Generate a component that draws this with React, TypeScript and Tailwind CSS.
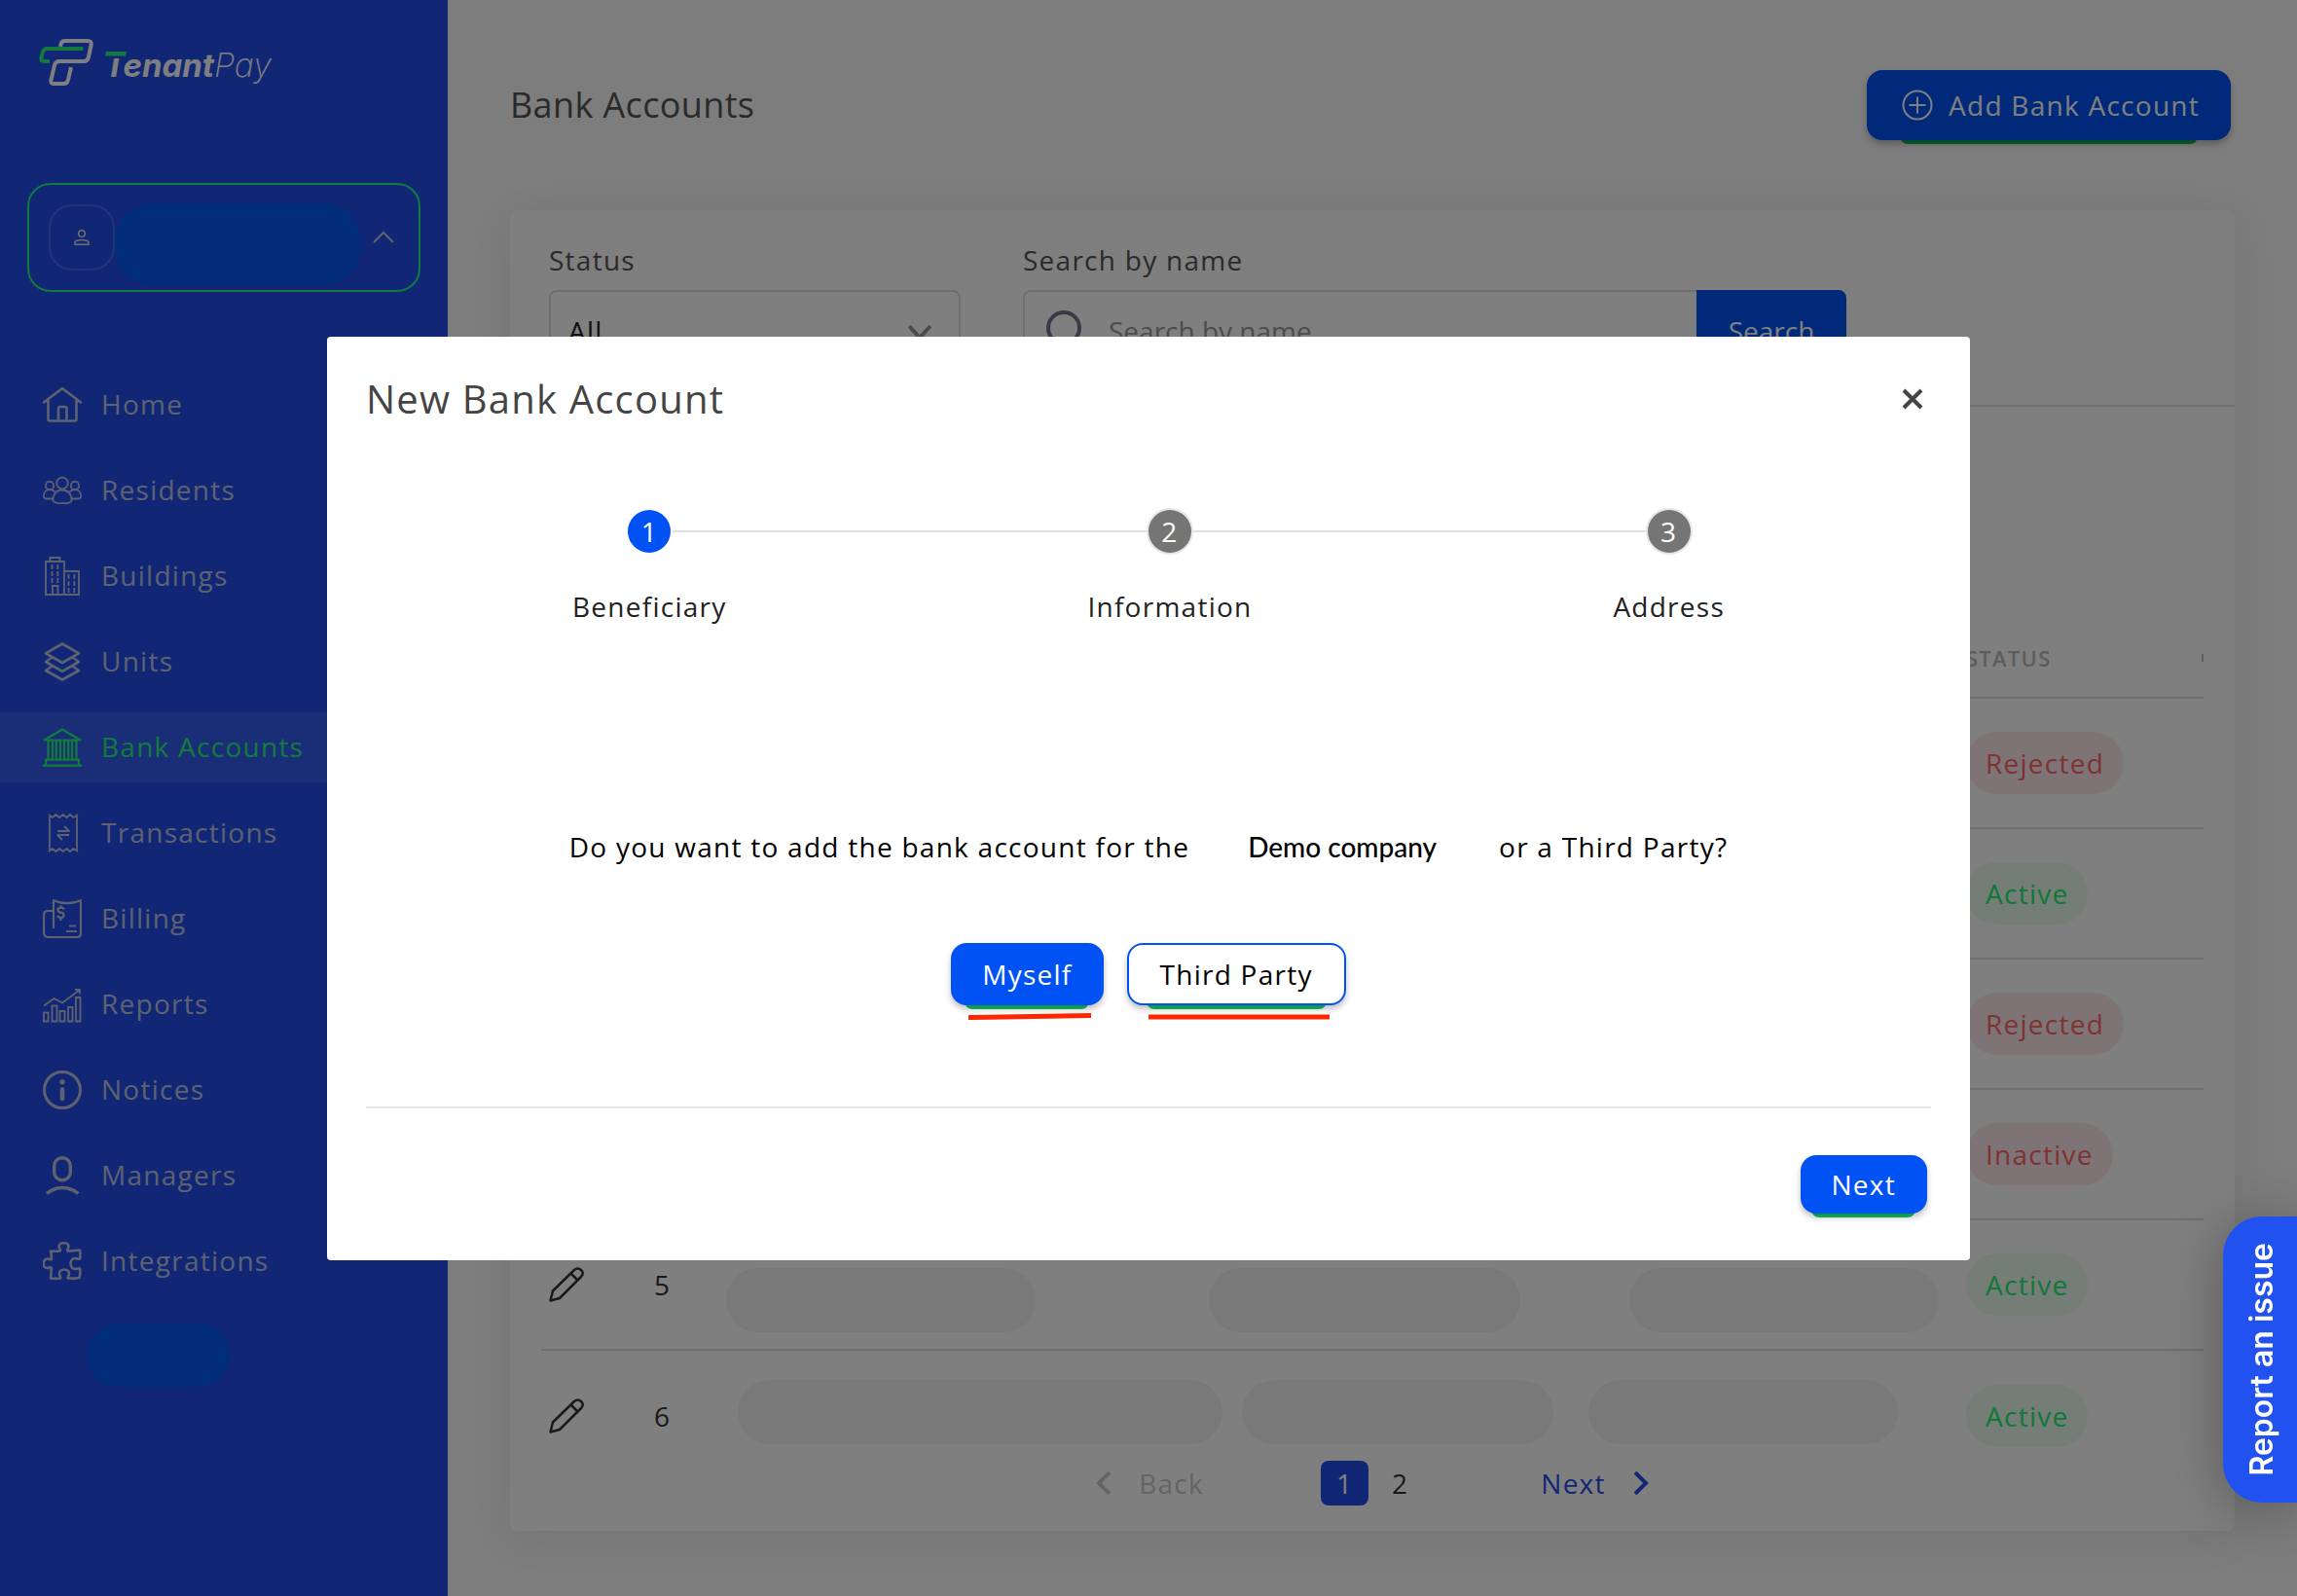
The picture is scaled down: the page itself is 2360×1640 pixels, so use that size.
import type { ReactNode } from 'react'
import clsx from 'clsx'

const navItems = [
  { name: 'Home', icon: <HomeIcon /> },
  { name: 'Residents', icon: <ResidentsIcon /> },
  { name: 'Buildings', icon: <BuildingsIcon /> },
  { name: 'Units', icon: <UnitsIcon /> },
  { name: 'Bank Accounts', icon: <BankIcon />, active: true },
  { name: 'Transactions', icon: <TransactionsIcon /> },
  { name: 'Billing', icon: <BillingIcon /> },
  { name: 'Reports', icon: <ReportsIcon /> },
  { name: 'Notices', icon: <NoticesIcon /> },
  { name: 'Managers', icon: <ManagersIcon /> },
  { name: 'Integrations', icon: <IntegrationsIcon /> },
]

// masked values, each account has its own block widths
const accounts = [
  { id: 1, status: 'Rejected', cell: 'pl-2.5', masks: ['w-[320px]', 'w-[320px] ml-44', 'w-[318px] ml-28'] },
  { id: 2, status: 'Active', cell: 'pl-2.5', masks: ['w-[320px]', 'w-[320px] ml-44', 'w-[318px] ml-28'] },
  { id: 3, status: 'Rejected', cell: 'pl-2.5', masks: ['w-[320px]', 'w-[320px] ml-44', 'w-[318px] ml-28'] },
  { id: 4, status: 'Inactive', cell: 'pl-2.5', masks: ['w-[320px]', 'w-[320px] ml-44', 'w-[318px] ml-28'] },
  { id: 5, status: 'Active', cell: 'pl-2.5 pt-8', masks: ['w-[318px]', 'w-[320px] ml-[178px]', 'w-[318px] ml-28'] },
  { id: 6, status: 'Active', cell: 'pl-[22px] pb-2', masks: ['w-[498px]', 'w-[320px] ml-5', 'w-[318px] ml-9'] },
]

const steps = ['Beneficiary', 'Information', 'Address']

function Icon({ children, width = 2 }: { children: ReactNode; width?: number }) {
  return (
    <svg
      viewBox="0 0 40 40"
      className="size-10 shrink-0"
      fill="none"
      stroke="currentColor"
      strokeWidth={width}
      strokeLinejoin="round"
      aria-hidden="true"
    >
      {children}
    </svg>
  )
}

function HomeIcon() {
  return (
    <Icon width={2.6}>
      <path d="M1 17.500 20 3l19 14.500" strokeLinecap="round" />
      <path d="M5.500 15v19.500q0 2 2 2h25q2 0 2-2V15M16 36V24q0-2 2-2h4.500q2 0 2 2v12" />
    </Icon>
  )
}

function ResidentsIcon() {
  return (
    <Icon width={1.8}>
      <circle cx="20" cy="12.500" r="5.800" />
      <circle cx="7" cy="15" r="4.200" />
      <circle cx="33" cy="15" r="4.200" />
      <path d="M20 19.500c-6 0-9.500 4-9.500 10.500 0 2 3 3.200 9.500 3.200s9.500-1.200 9.500-3.200c0-6.500-3.500-10.500-9.500-10.500Z" />
      <path d="M10.500 28.500H4q-3 0-3-2.500c0-4 2.500-6.800 6-6.800 2.500 0 4.500.800 5.500 2.500M29.500 28.500H36q3 0 3-2.500c0-4-2.500-6.800-6-6.800-2.500 0-4.500.800-5.500 2.500" />
    </Icon>
  )
}

function BuildingsIcon() {
  return (
    <Icon width={1.8}>
      <path d="M3 39V5h19v34ZM7.500 5V1h10v4M22 15h15v24H22M10 39v-9h5.500v9" strokeLinejoin="miter" />
      <path d="M9.500 8v5m5.800-5v5M9.500 15v5m5.800-5v5M9.500 22v5m5.800-5v5M26.500 18v5m5.800-5v5M26.500 25v5m5.800-5v5M26.500 32v5m5.800-5v5" />
    </Icon>
  )
}

function UnitsIcon() {
  return (
    <Icon width={2.6}>
      <path d="m20 1.500 17 9.800L20 21 3 11.300Z" />
      <path d="M9.500 15.500 3 20l17 9.800L37 20l-6.500-4.500" />
      <path d="M9.500 24.500 3 29l17 9.500L37 29l-6.500-4.500" />
    </Icon>
  )
}

function BankIcon() {
  return (
    <Icon width={2.2}>
      <path d="M20 1.500 38.500 12.500h-37Z" />
      <path d="M5.500 13h4.500v19.500H5.500ZM13.800 13h4.200v19.500h-4.200ZM22 13h4.200v19.500H22ZM30 13h4.500v19.500H30Z" />
      <path d="M3 38v-5.500h34V38M0 38.700h40" />
    </Icon>
  )
}

function TransactionsIcon() {
  return (
    <Icon width={1.8}>
      <path d="M7 1v38M35 1v38M6 1l4 3 3.500-3L17 4l3.700-3L24.500 4 28 1l3.500 3L36 1M6 39l4-3 3.500 3 3.500-3 3.700 3 3.800-3 3.500 3 3.500-3 4.500 3" />
      <path d="M15 18h12l-5-5M27 22H15l5 5" />
    </Icon>
  )
}

function BillingIcon() {
  return (
    <Icon width={2.200}>
      <path d="M11 30V1.200q14 6 28 0V35q0 4-4 4H6q-5 0-5-5V16q0-4 4-4h6" />
      <path d="M22 10.500q-1-1.800-3.500-1.800c-4 0-4 4.600 0 5 4 .400 4 5.300 0 5.300q-2.500 0-3.500-2M18.500 6.500V9m0 10v3M27 27.500h7M24 33h11" />
    </Icon>
  )
}

function ReportsIcon() {
  return (
    <Icon width={1.800}>
      <path d="M1 28.500h4.500v9H1ZM9.500 21.500h5v16h-5ZM17.500 27h5v10.500h-5ZM26 23h4.500v14.500H26ZM34 13h4.500v24.500H34Z" strokeLinejoin="miter" />
      <path d="M1 21.500 11.500 14l8.500 4.500L37.500 5.500M33 5h5v4.500" />
    </Icon>
  )
}

function NoticesIcon() {
  return (
    <Icon width={3}>
      <circle cx="20" cy="20" r="18.500" />
      <circle cx="20" cy="11.800" r="2.600" fill="currentColor" stroke="none" />
      <path d="M20 19.500v9.500" strokeWidth="4.500" strokeLinecap="round" />
    </Icon>
  )
}

function ManagersIcon() {
  return (
    <Icon width={3.400}>
      <rect x="11.700" y="1.700" width="16.600" height="23" rx="8.300" />
      <path d="M4 38.500Q11 32.500 20 32.500T36.500 38.500" />
    </Icon>
  )
}

function IntegrationsIcon() {
  return (
    <Icon width={2.600}>
      <path d="M8 9.500q5 .5 9.500 0c1.500-1-1-2.500-1-4.500C16.500 2.500 18.500 1.300 21.500 1.300s5 1.200 5 3.700c0 2-2.500 3.500-1 4.500 4 .300 8.500-1 12.500-1 .8 3 .5 6 0 9-1.500 1-2.500-.5-4.500-.5-3 0-5 2.500-5 5.500s2 5.500 5 5.500c2 0 3-1.500 4.500-.5.500 3 .5 6-.5 9.500-4 1-8 .5-11.500.5-1-1.500 1-2 1-4.500 0-2.500-2-4.500-5-4.500s-5 2-5 4.500c0 2.500 2 3 1 4.500-3.500.5-6.500.5-10 0 .5-3.500 1-7.500.5-11-1.500-1-2 .5-4 .5-2.500 0-4-2-4-4.500S2.500 17.500 5 17.500c2 0 2.500 1.500 4 .5 0-3 0-5.500-1-8.500Z" />
    </Icon>
  )
}

function Logo() {
  return (
    <svg viewBox="0 0 260 52" className="h-[52px] w-[260px]" fill="none" role="img" aria-label="TenantPay">
      <g strokeWidth="4" strokeLinejoin="round">
        <path
          stroke="#fff"
          d="m22 8 .7-3Q23.500 2 27 2h23q4.500 0 3.700 4L51 18.500Q50 23 46 23H21q-4 0-5 4l-3.500 15Q11.500 46 15 46h10.500q3.500 0 4.500-4l3-13"
        />
        <path stroke="#24f478" d="M45.500 10H8.500Q5 10 4 13.500L2.500 19Q1.500 23 5.500 23H11" />
      </g>
      <text x="67" y="39" fill="#fff" fontFamily="Inter, sans-serif" fontStyle="italic" letterSpacing="0">
        <tspan fontWeight="700" fontSize="33">Tenant</tspan>
        <tspan fontWeight="200" fontSize="34">Pay</tspan>
      </text>
      <path fill="#224fec" d="M66 10h26v10H66Z" />
      <path fill="#24f478" d="M69 13h21l-1 4.500H68Z" />
    </svg>
  )
}

function Chevron({ d, className }: { d: string; className: string }) {
  return (
    <svg viewBox="0 0 24 24" className={className} fill="none" stroke="currentColor" aria-hidden="true">
      <path d={d} />
    </svg>
  )
}

// Button with the green edge showing under it
function RaisedButton({ children, className, outlined }: { children: ReactNode; className: string; outlined?: boolean }) {
  return (
    <div className="relative isolate">
      <span className="absolute inset-x-[9%] -bottom-1 -z-10 h-4 rounded-xl bg-[#10c35c]" />
      <button
        type="button"
        className={clsx(
          'flex items-center rounded-2xl px-8 shadow-[0_4px_6px_rgba(0,0,0,0.25)]',
          outlined ? 'border-2 border-[#0052f5] bg-white text-black' : 'bg-[#0052f5] text-white',
          className,
        )}
      >
        {children}
      </button>
    </div>
  )
}

function Sidebar() {
  return (
    <aside className="flex w-[460px] shrink-0 flex-col bg-[#224fec]">
      <div className="px-10 pt-10">
        <Logo />
      </div>

      <button
        type="button"
        aria-label="Account"
        className="mx-7 mt-24 flex h-28 items-center rounded-3xl border-2 border-[#24f478] pl-5 pr-6"
      >
        <span className="flex size-[68px] items-center justify-center rounded-3xl border-2 border-white/15 text-[#ddd]">
          <svg viewBox="0 0 16 16" className="size-4" fill="none" stroke="currentColor" strokeWidth="1.5" aria-hidden="true">
            <circle cx="8" cy="4" r="3.300" />
            <path d="M1 15.200v-2.700Q3 10.500 8 10.500t7 2v2.700Z" />
          </svg>
        </span>
        <span className="mt-3.5 h-[84px] w-[253px] rounded-[38px] bg-[#0059f4]" />
        <Chevron d="m2 17 10-10 10 10" className="ml-auto size-6 stroke-2 text-[#c4c4d4]" />
      </button>

      <nav className="mt-20 flex flex-col gap-4">
        {navItems.map((item) => (
          <a
            key={item.name}
            href="#"
            className={clsx(
              'flex h-[72px] items-center gap-5 pl-11',
              item.active ? 'bg-white/8 text-[#24f478]' : 'text-[#bcc4e0]',
            )}
          >
            {item.icon}
            <span className="pb-0.5">{item.name}</span>
          </a>
        ))}
      </nav>
      <div className="ml-[90px] mt-7 h-[65px] w-[146px] rounded-[32px] bg-[#0059f4]" />
    </aside>
  )
}

function Filters() {
  return (
    <div className="flex gap-16 border-b-2 border-[#e2e2e2] px-10 pb-[34px] pt-8">
      <div className="flex w-[423px] flex-col gap-3">
        <label htmlFor="status" className="text-[#555]">
          Status
        </label>
        <div className="relative">
          <select
            id="status"
            className="h-[84px] w-full appearance-none rounded-lg border-2 border-[#dcdcdc] px-[18px] text-[#222]"
          >
            <option>All</option>
          </select>
          <Chevron d="m1 5 11 12L23 5" className="pointer-events-none absolute right-[30px] top-8 size-6 stroke-4 text-[#999]" />
        </div>
      </div>
      <div className="flex flex-col gap-3">
        <label htmlFor="search" className="text-[#555]">
          Search by name
        </label>
        <div className="flex h-[84px]">
          <div className="flex w-[692px] items-center gap-[22px] rounded-l-lg border-2 border-r-0 border-[#dcdcdc] pl-[22px]">
            <svg viewBox="0 0 42 42" className="size-[42px] shrink-0 text-[#70748f]" fill="none" stroke="currentColor" strokeWidth="4" aria-hidden="true">
              <circle cx="18" cy="18" r="16" />
              <path d="m30 30 10 10" />
            </svg>
            <input
              id="search"
              placeholder="Search by name"
              className="min-w-0 flex-1 tracking-normal placeholder:text-[#999]"
            />
          </div>
          <button type="button" className="w-[154px] rounded-r-lg bg-[#0052f5] tracking-normal text-white">
            Search
          </button>
        </div>
      </div>
    </div>
  )
}

function StatusChip({ status }: { status: string }) {
  return (
    <span
      className={clsx(
        'inline-flex h-16 items-center rounded-full px-5',
        status === 'Active' ? 'bg-[#e8fcef] text-[#22f070]' : 'bg-[#ffe9ea] text-[#ff6568]',
      )}
    >
      {status}
    </span>
  )
}

function AccountsTable() {
  return (
    <div className="px-8 pt-[217px]">
      <table className="w-full table-fixed">
        <thead>
          <tr className="h-[82px] border-b-2 border-[#dedede] text-left">
            <th className="w-28" aria-label="Edit" />
            <th className="w-[68px]" aria-label="Number" />
            <th aria-label="Details" />
            <th className="w-[244px] text-[22px] font-semibold text-[#bbb]">
              <div className="flex items-center justify-between">
                STATUS
                <span className="h-2 w-0.5 bg-[#bbb]" />
              </div>
            </th>
          </tr>
        </thead>
        <tbody>
          {accounts.map((account) => (
            <tr key={account.id} className="h-[134px] border-b-2 border-[#dedede] last:border-0">
              <td className="pl-2">
                <button type="button" aria-label="Edit" className="block">
                  <svg viewBox="0 0 36 36" className="size-9" fill="none" stroke="#333" strokeWidth="2.500" strokeLinejoin="round" aria-hidden="true">
                    <path d="M1.500 34.500 4 24.500 26 3q3.500-3 7 0t0 7L11 32Z" />
                    <path d="m22.500 6.500 7 7" />
                  </svg>
                </button>
              </td>
              <td className="pl-1 text-[#333]">{account.id}</td>
              <td>
                <div className={clsx('flex', account.cell)}>
                  {account.masks.map((mask, idx) => (
                    <span key={idx} className={clsx('h-[66px] shrink-0 rounded-full bg-[#f3f3f3]', mask)} />
                  ))}
                </div>
              </td>
              <td>
                <StatusChip status={account.status} />
              </td>
            </tr>
          ))}
        </tbody>
      </table>
    </div>
  )
}

function Pagination() {
  return (
    <nav aria-label="Pages" className="-mt-5 mb-6.5 flex h-[46px] items-center justify-center">
      <button type="button" className="flex items-center gap-6 text-[#c8c8c8]">
        <Chevron d="M18 1 7 12l11 11" className="size-6 stroke-4" />
        Back
      </button>
      <button type="button" className="ml-[120px] h-[46px] w-[49px] rounded-lg bg-[#224fec] text-white">
        1
      </button>
      <button type="button" className="ml-6 text-[#333]">
        2
      </button>
      <button type="button" className="ml-[136px] flex items-center gap-6 text-[#224fec]">
        Next
        <Chevron d="m6 1 11 11L6 23" className="size-6 stroke-4" />
      </button>
    </nav>
  )
}

function Stepper() {
  return (
    <ol className="flex px-[252px] pt-[86px]">
      {steps.map((step, idx) => (
        <li key={step} className={clsx('flex', idx > 0 && 'flex-auto')}>
          {idx > 0 && <span className="mt-[21px] h-0.5 flex-1 bg-[#e0e0e0]" />}
          <div className="flex flex-col gap-9">
            <div className="flex items-center gap-0.5">
              <span className={clsx('h-0.5 flex-1', idx > 0 && 'bg-[#e0e0e0]')} />
              <span
                className={clsx(
                  'flex size-11 items-center justify-center rounded-full text-white',
                  idx === 0 ? 'bg-[#0052f5]' : 'bg-[#757575] ring-2 ring-[#e6e6e6]',
                )}
              >
                {idx + 1}
              </span>
              <span className={clsx('h-0.5 flex-1', idx < steps.length - 1 && 'bg-[#e0e0e0]')} />
            </div>
            <span className="text-[#222]">{step}</span>
          </div>
        </li>
      ))}
    </ol>
  )
}

function NewAccountDialog() {
  return (
    <div
      role="dialog"
      aria-labelledby="dialog-title"
      className="w-full max-w-[1688px] rounded-sm bg-white px-10 pb-12 pt-9"
    >
      <div className="flex h-14 items-center justify-between">
        <h2 id="dialog-title" className="text-[40px] tracking-[0.03em] text-[#444]">
          New Bank Account
        </h2>
        <button type="button" aria-label="Close" className="mr-2">
          <svg viewBox="0 0 22 22" className="size-[22px]" fill="none" stroke="#444" strokeWidth="4" aria-hidden="true">
            <path d="m2 2 18 18M20 2 2 20" />
          </svg>
        </button>
      </div>

      <div className="-mx-10">
        <Stepper />
      </div>

      <p className="mt-[209px] flex items-center justify-center text-black">
        Do you want to add the bank account for the
        <span className="ml-[60px] mr-16 font-[Lato] font-medium tracking-normal">Demo company</span>
        or a Third Party?
      </p>

      <div className="mt-20 flex justify-center gap-6">
        <div className="relative">
          <RaisedButton className="h-16">Myself</RaisedButton>
          <svg viewBox="0 0 126 8" className="absolute left-[18px] top-[71px] h-2 w-[126px]" aria-hidden="true">
            <path d="M0 5.500 126 3.500" stroke="#ff2600" strokeWidth="5" />
          </svg>
        </div>
        <div className="relative">
          <RaisedButton className="h-16" outlined>
            Third Party
          </RaisedButton>
          <svg viewBox="0 0 186 8" className="absolute left-[22px] top-[72px] h-2 w-[186px]" aria-hidden="true">
            <path d="M0 4h186" stroke="#ff2600" strokeWidth="5" />
          </svg>
        </div>
      </div>

      <div className="mt-[104px] flex justify-end border-t-2 border-[#e6e6e6] pr-1 pt-12">
        <RaisedButton className="h-[60px]">Next</RaisedButton>
      </div>
    </div>
  )
}

export default function App() {
  return (
    <div className="flex min-h-screen bg-[#fafafa] font-['Open_Sans',sans-serif] text-[28px] leading-[38px] tracking-[0.045em]">
      <Sidebar />

      <main className="min-w-0 flex-1 px-16 pb-16 pt-[72px]">
        <header className="flex items-center justify-between pr-1">
          <h1 className="text-[36px] font-medium tracking-[0.01em] text-[#555]">Bank Accounts</h1>
          <RaisedButton className="h-[72px] gap-4 pl-9">
            <svg viewBox="0 0 32 32" className="size-8" fill="none" stroke="currentColor" strokeWidth="2" aria-hidden="true">
              <circle cx="16" cy="16" r="14.500" />
              <path d="M16 7.500v17M7.500 16h17" />
            </svg>
            Add Bank Account
          </RaisedButton>
        </header>

        <section className="mt-[72px] overflow-hidden rounded-lg bg-white shadow-[0_8px_40px_rgba(20,20,80,0.08)]">
          <Filters />
          <AccountsTable />
          <Pagination />
        </section>
      </main>

      {/* Modal */}
      <div className="fixed inset-0 flex items-center justify-center bg-black/50">
        <NewAccountDialog />
      </div>

      {/* Feedback tab */}
      <button
        type="button"
        className="fixed bottom-24 right-0 flex h-[294px] w-[76px] items-center justify-center rounded-l-[40px] bg-[#2152f0] pl-1 font-[Inter] text-[32px] font-semibold tracking-normal text-white shadow-[0_8px_60px_rgba(0,0,0,0.3)]"
      >
        <span className="rotate-180 [writing-mode:vertical-rl]">Report an issue</span>
      </button>
    </div>
  )
}
